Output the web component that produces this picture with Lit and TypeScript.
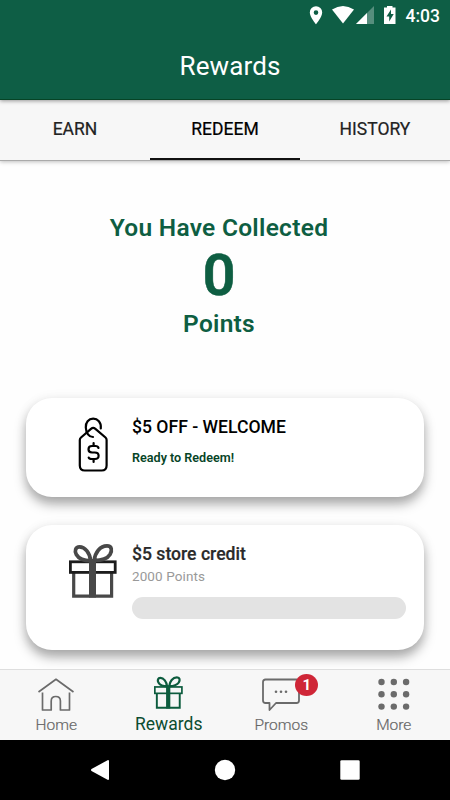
import { LitElement, html, css, svg } from "lit";
import { customElement, property } from "lit/decorators.js";

@customElement("gift-icon")
class GiftIcon extends LitElement {
  static styles = css`
    :host { display: block; }
    svg { display: block; width: 100%; height: 100%; }
    .line { fill: none; stroke: currentColor; }
    .lid { fill: none; stroke: var(--lid, currentColor); }
  `;
  render() {
    return html`<svg viewBox="0 0 48 54">
      <path class="line" stroke-width="3.2" d="M4.7 29V52.1H42.6V29" />
      <rect class="lid" x="1.4" y="17.8" width="44.8" height="10.6" stroke-width="2.8" />
      <path class="line" stroke-width="3.7" d="M21.6 16.8C21 9 16 2.8 10.5 2.8C6.5 2.8 5.3 7 7.3 10.5C9.8 14.8 14.5 16.8 21.6 16.8Z" />
      <path class="line" stroke-width="3.7" d="M25.2 16.5C26 8.5 31 2 38 1.9C43 1.9 43.3 6.5 41 10.5C38.5 14.5 33 16.5 25.2 16.5Z" />
      <rect x="20" y="15" width="7" height="38.5" fill="currentColor" />
    </svg>`;
  }
}

@customElement("reward-card")
class RewardCard extends LitElement {
  static styles = css`
    :host {
      display: flex; box-sizing: border-box; background: #fff; border-radius: 26px;
      box-shadow: 0 7px 12px rgba(0, 0, 0, 0.34), 0 0 14px rgba(0, 0, 0, 0.04);
    }
    .art { width: 106px; flex: none; }
    .body { flex: 1; padding-right: 18px; }
  `;
  render() {
    return html`<div class="art"><slot name="art"></slot></div><div class="body"><slot></slot></div>`;
  }
}

@customElement("nav-item")
class NavItem extends LitElement {
  @property() label = "";
  static styles = css`
    :host { display: flex; flex-direction: column; align-items: center; color: #666; font-size: 15.5px; font-weight: 300; -webkit-text-stroke: 0.2px; }
    :host([active]) { color: #0b4d30; font-size: 17.5px; font-weight: 400; -webkit-text-stroke: 0; }
    .icon { height: 46px; display: flex; align-items: flex-start; }
    :host([active]) .icon { height: 45px; }
    .label { line-height: 19px; white-space: nowrap; }
  `;
  render() {
    return html`<div class="icon"><slot></slot></div><div class="label">${this.label}</div>`;
  }
}

@customElement("app-root")
class AppRoot extends LitElement {
  static styles = css`
    :host {
      display: flex; flex-direction: column; width: 450px; height: 800px; overflow: hidden;
      background: #fefefe; font-family: Roboto, "Liberation Sans", sans-serif; color: #111;
    }
    svg { display: block; }
    .top { height: 99px; flex: none; background: #0e5e45; border-bottom: 1px solid #064426; color: #fff; z-index: 2; box-shadow: 0 1px 4px rgba(0, 0, 0, 0.4); }
    .status { height: 32px; display: flex; justify-content: flex-end; align-items: center; padding-right: 10px; box-sizing: border-box; }
    .clock { font-size: 17.5px; font-weight: 500; line-height: 32px; }
    .title { text-align: center; font-size: 26px; line-height: 68px; height: 67px; letter-spacing: 0.1px; padding-left: 10px; }
    .tabs { display: grid; grid-template-columns: repeat(3, 1fr); height: 60px; flex: none; background: #f7f7f7; border-bottom: 1px solid #aaa; box-shadow: 0 1px 4px rgba(0, 0, 0, 0.25); z-index: 1; }
    .tab { text-align: center; font-size: 17.5px; line-height: 58px; box-sizing: border-box; color: #222; -webkit-text-stroke: 0.2px; }
    .tab.on { border-bottom: 2px solid #111; color: #000; }
    .content { flex: 1; min-height: 0; overflow: hidden; }
    .points { text-align: center; color: #0e5e42; font-weight: 600; padding: 52px 12px 0 0; height: 185px; }
    .lead { font-size: 24.5px; line-height: 30px; letter-spacing: 0.28px; }
    .count { font-size: 58px; line-height: 64px; -webkit-text-stroke: 0.5px; }
    .unit { font-size: 24.5px; line-height: 30px; margin-top: 2px; letter-spacing: 0.25px; }
    .cards { display: flex; flex-direction: column; gap: 28px; padding: 0 26px; }
    .offer { height: 99px; padding-top: 17px; }
    .credit { height: 125px; padding-top: 17px; }
    .name { font-size: 17.6px; line-height: 24px; font-weight: 500; white-space: nowrap; }
    .offer .name { color: #000; }
    .credit .name { color: #2a2a2a; -webkit-text-stroke: 0.2px; }
    .ready { margin-top: 11px; font-size: 12.6px; line-height: 16px; font-weight: 600; color: #064426; }
    .cost { font-size: 13.5px; line-height: 18px; color: #999; margin-top: 1px; letter-spacing: 0.1px; }
    .bar { height: 22px; border-radius: 11px; background: #e3e3e3; margin-top: 12px; }
    .tag { margin: 2px 0 0 51px; }
    .gift { width: 48px; height: 54px; margin: 2px 0 0 43px; color: #484848; --lid: #1c1c1c; }
    .nav { height: 70px; flex: none; display: grid; grid-template-columns: repeat(4, 1fr); background: #f7f7f7; border-top: 1px solid #dedede; }
    .giftsmall { width: 29px; height: 33px; margin-top: 6px; color: #0d5c3e; }
    .house { margin-top: 6px; }
    .dots { margin-top: 7px; }
    .promo { position: relative; margin-top: 7px; }
    .badge { position: absolute; left: 33px; top: -3px; width: 23px; height: 22px; border-radius: 50%; background: #cf2637; color: #fff; font-size: 15px; font-weight: 700; line-height: 22px; text-align: center; -webkit-text-stroke: 0; }
    .system { height: 60px; flex: none; background: #000; display: flex; align-items: center; justify-content: center; }
  `;

  statusIcons() {
    return html`<svg width="97" height="32" viewBox="0 0 97 32" fill="#fff">
      <path fill-rule="evenodd" d="M7 6.3A6.2 6.2 0 0 0 .8 12.5C.8 17 7 24.2 7 24.2S13.2 17 13.2 12.5A6.2 6.2 0 0 0 7 6.3ZM7 10.3A2.3 2.3 0 1 1 7 14.9A2.3 2.3 0 0 1 7 10.3Z" />
      <path d="M23 9.5Q34 2.5 45 9.5L34 23.5Z" />
      <path opacity=".3" d="M65 6V24H47Z" />
      <path d="M58 13V24H47Z" />
      <path fill-rule="evenodd" d="M78 6h5.5v1.5h3V24H75V7.5h3ZM82 9.5l-4.5 7h2.7v5l4.5-7.5h-2.7Z" />
    </svg>`;
  }

  render() {
    const dots = [0, 1, 2].flatMap((r) => [0, 1, 2].map((c) => svg`<circle cx=${3.5 + c * 12.3} cy=${3.5 + r * 12.3} r="3.2" />`));
    return html`
      <div class="top">
        <div class="status">${this.statusIcons()}<span class="clock">4:03</span></div>
        <div class="title">Rewards</div>
      </div>
      <div class="tabs">
        <div class="tab">EARN</div><div class="tab on">REDEEM</div><div class="tab">HISTORY</div>
      </div>
      <div class="content">
        <div class="points">
          <div class="lead">You Have Collected</div>
          <div class="count">0</div>
          <div class="unit">Points</div>
        </div>
        <div class="cards">
          <reward-card class="offer">
            <svg slot="art" class="tag" width="32" height="56" viewBox="0 0 32 56" fill="none" stroke="#000" stroke-width="2.2" stroke-linecap="round" stroke-linejoin="round">
              <path d="M2.8 23Q2.8 21.5 4 20.5L14 11.8Q16.200 10 18.400 11.8L28.500 20.5Q29.600 21.5 29.600 23V48.500Q29.600 53.500 24.600 53.500H7.800Q2.800 53.500 2.800 48.500Z" />
              <path d="M23.800 11.500C24.500 5 20.500 1.700 16.200 1.700C11.500 1.700 8.500 5.500 8.800 10.500C9 16 12 20 16 20" />
              <path d="M21.500 31Q21 29 18.500 29H15Q11.500 29 11.500 32.200T15 35.500H17.800Q21.600 35.500 21.600 38.800T17.800 42H15Q12 42 11.700 40.500M16.600 26V29M16.600 42V45" />
            </svg>
            <div class="name">$5 OFF - WELCOME</div>
            <div class="ready">Ready to Redeem!</div>
          </reward-card>
          <reward-card class="credit">
            <gift-icon slot="art" class="gift"></gift-icon>
            <div class="name">$5 store credit</div>
            <div class="cost">2000 Points</div>
            <div class="bar"></div>
          </reward-card>
        </div>
      </div>
      <div class="nav">
        <nav-item label="Home">
          <svg class="house" width="36" height="36" viewBox="0 0 36 36" fill="none" stroke="#6b6b6b" stroke-width="1.7" stroke-linejoin="round">
            <path d="M.5 16L18 3.3L35.500 16M4.500 16.500V34H13.200V25Q13.200 20.500 17.800 20.500T22.400 25V34H31.500V16.500" />
          </svg>
        </nav-item>
        <nav-item active label="Rewards"><gift-icon class="giftsmall"></gift-icon></nav-item>
        <nav-item label="Promos">
          <div class="promo">
            <svg width="38" height="36" viewBox="0 0 38 36" fill="none" stroke="#6b6b6b" stroke-width="1.8" stroke-linejoin="round">
              <path d="M3.5 2.5H34.5Q37 2.5 37 5V23.5Q37 26 34.500 26H14L7.500 33V26H3.500Q1 26 1 23.500V5Q1 2.500 3.500 2.500Z" />
              <g fill="#6b6b6b" stroke="none"><circle cx="14" cy="14.7" r="1.3" /><circle cx="19" cy="14.7" r="1.3" /><circle cx="24" cy="14.7" r="1.3" /></g>
            </svg>
            <div class="badge">1</div>
          </div>
        </nav-item>
        <nav-item label="More">
          <svg class="dots" width="32" height="36" viewBox="0 -1.5 32 36" fill="#6b6b6b">${dots}</svg>
        </nav-item>
      </div>
      <div class="system">
        <svg width="310" height="60" viewBox="0 0 310 60" fill="#fff">
          <path d="M38 20Q39 20 39 21V39Q39 40 38 40L21.500 31Q20.500 30 21.500 29Z" />
          <circle cx="155" cy="30" r="10.2" />
          <rect x="270.3" y="20.3" width="19.4" height="19.4" rx="1.3" />
        </svg>
      </div>`;
  }
}
